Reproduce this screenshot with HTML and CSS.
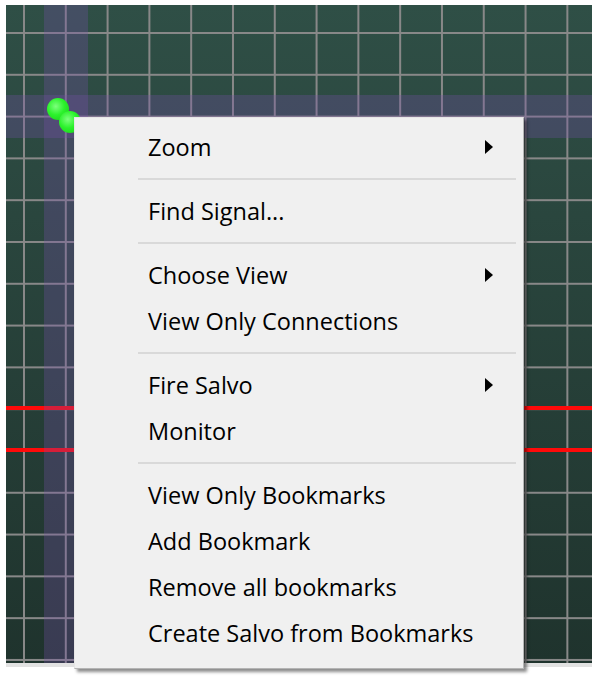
FILE: index.html
```html
<!DOCTYPE html>
<html lang="en">
<head>
  <meta charset="UTF-8">
  <title>Routing view</title>
  <link rel="stylesheet" href="styles.css">
</head>
<body>
  <div class="screen">
    <div class="canvas">
      <div class="wire wire-top"></div>
      <div class="wire wire-bottom"></div>
      <div class="band band-v"></div>
      <div class="band band-h"></div>
      <div class="node node-a"></div>
      <div class="node node-b"></div>
    </div>
    <div class="strip"></div>

    <!-- context menu -->
    <ul class="menu">
      <li class="item">Zoom <span class="arrow"></span></li>
      <li class="sep"></li>
      <li class="item">Find Signal...</li>
      <li class="sep"></li>
      <li class="item">Choose View <span class="arrow"></span></li>
      <li class="item">View Only Connections</li>
      <li class="sep"></li>
      <li class="item">Fire Salvo <span class="arrow"></span></li>
      <li class="item">Monitor</li>
      <li class="sep"></li>
      <li class="item">View Only Bookmarks</li>
      <li class="item">Add Bookmark</li>
      <li class="item">Remove all bookmarks</li>
      <li class="item">Create Salvo from Bookmarks</li>
    </ul>
  </div>
</body>
</html>
```

FILE: styles.css
```css
body { margin: 0; background: #fff; font-family: "Open Sans", "Noto Sans", sans-serif; }
.screen { position: relative; width: 604px; height: 679px; padding: 5px 0 0 6px; box-sizing: border-box; }

.canvas {
  position: relative; width: 586px; height: 658px; overflow: hidden;
  background-color: #2a463e;
  background-image:
    linear-gradient(to right, #888 2px, transparent 2px),
    linear-gradient(to bottom, #888 2px, transparent 2px),
    linear-gradient(to bottom, #2f4f46, #1f332d);
  background-size: 41.8px 100%, 100% 41.8px, 100% 100%;
  background-position: 17px 0, 0 27px, 0 0;
  background-repeat: repeat-x, repeat-y, no-repeat;
}
.strip { width: 586px; height: 4px; background: #e2e2e2; }

.wire { position: absolute; left: 0; right: 0; height: 4px; background: #ff0a0a; }
.wire-top { top: 401px; }
.wire-bottom { top: 443px; }

.band { position: absolute; background: rgba(120, 80, 170, 0.3); }
.band-v { left: 38px; width: 44px; top: 0; bottom: 0; }
.band-h { top: 90px; height: 43px; left: 0; right: 0; }

.node {
  position: absolute; width: 22px; height: 22px; border-radius: 50%;
  background: radial-gradient(circle at 40% 38%, #7dff7d 0, #2cf22c 45%, #16c916 100%);
}
.node-a { left: 41px; top: 93px; }
.node-b { left: 53px; top: 106px; }

.menu {
  position: absolute; left: 74px; top: 117px; width: 448px; height: 544px;
  margin: 0; padding: 6px 0 0; list-style: none;
  background: #f0f0f0; border: 1px solid #b4b4b4; border-left-color: #e6e6e6; border-top-color: #e6e6e6;
  box-shadow: 3px 3px 3px rgba(0, 0, 0, 0.45);
}
.item { display: flex; align-items: center; height: 46px; padding-left: 73px; font-size: 23.5px; color: #000; }
.arrow {
  margin-left: auto; margin-right: 30px; width: 0; height: 0;
  border-top: 7px solid transparent; border-bottom: 7px solid transparent; border-left: 8px solid #000;
}
.sep { height: 2px; margin: 8px 7px 8px 63px; background: #d9d9d9; }
```
